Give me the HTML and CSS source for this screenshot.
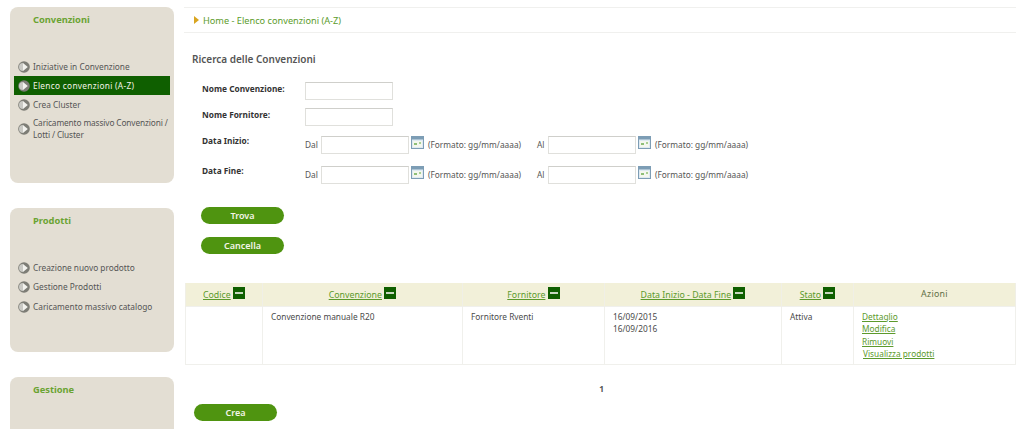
FILE: index.html
```html
<!DOCTYPE html>
<html lang="it">
<head>
    <meta charset="UTF-8">
    <title>Elenco convenzioni</title>
    <link rel="stylesheet" href="styles.css">
</head>
<body>
    <svg class="defs" width="0" height="0">
        <symbol id="bullet" viewBox="0 0 12 12">
            <circle cx="6" cy="6" r="5.8" fill="#7d7d76"/>
            <path d="M5 2 A4 4 0 0 0 5 10 Z" fill="#c9c9c4"/>
            <path d="M5 2 L9.8 6 L5 10 Z" fill="#f2f2ee"/>
        </symbol>
        <symbol id="calendar" viewBox="0 0 13 13">
            <rect x="0.5" y="0.5" width="12" height="12" fill="#dfeaf2" stroke="#7d9db5"/>
            <rect x="1" y="1" width="11" height="2.5" fill="#7d9db5"/>
            <rect x="2" y="5" width="9" height="6" fill="#f4f7ee"/>
            <rect x="3" y="7" width="3" height="2" fill="#8fbf78"/>
            <rect x="8" y="6" width="2" height="2" fill="#a8cf94"/>
        </symbol>
    </svg>

    <div class="page">
        <aside class="sidebar">
            <section class="panel panel-first">
                <h2>Convenzioni</h2>
                <ul class="menu">
                    <li><svg class="bullet"><use href="#bullet"/></svg><a href="#">Iniziative in Convenzione</a></li>
                    <li class="active"><svg class="bullet"><use href="#bullet"/></svg><a href="#">Elenco convenzioni (A-Z)</a></li>
                    <li><svg class="bullet"><use href="#bullet"/></svg><a href="#">Crea Cluster</a></li>
                    <li><svg class="bullet"><use href="#bullet"/></svg><a href="#" class="long">Caricamento massivo Convenzioni /<br>Lotti / Cluster</a></li>
                </ul>
            </section>
            <section class="panel panel-second">
                <h2>Prodotti</h2>
                <ul class="menu">
                    <li><svg class="bullet"><use href="#bullet"/></svg><a href="#">Creazione nuovo prodotto</a></li>
                    <li><svg class="bullet"><use href="#bullet"/></svg><a href="#">Gestione Prodotti</a></li>
                    <li><svg class="bullet"><use href="#bullet"/></svg><a href="#">Caricamento massivo catalogo</a></li>
                </ul>
            </section>
            <section class="panel panel-third">
                <h2>Gestione</h2>
            </section>
        </aside>

        <main class="content">
            <div class="breadcrumb"><span class="arrow"></span>Home - Elenco convenzioni (A-Z)</div>

            <h1>Ricerca delle Convenzioni</h1>

            <form class="search">
                <div class="row row-text">
                    <label>Nome Convenzione:</label>
                    <input type="text">
                </div>
                <div class="row row-text">
                    <label>Nome Fornitore:</label>
                    <input type="text">
                </div>
                <div class="row row-date">
                    <label>Data Inizio:</label>
                    <div class="range">
                        <span class="from">Dal</span><input type="text"><svg class="cal"><use href="#calendar"/></svg><span class="hint">(Formato: gg/mm/aaaa)</span>
                        <span class="to">Al</span><input type="text"><svg class="cal"><use href="#calendar"/></svg><span class="hint">(Formato: gg/mm/aaaa)</span>
                    </div>
                </div>
                <div class="row row-date">
                    <label>Data Fine:</label>
                    <div class="range">
                        <span class="from">Dal</span><input type="text"><svg class="cal"><use href="#calendar"/></svg><span class="hint">(Formato: gg/mm/aaaa)</span>
                        <span class="to">Al</span><input type="text"><svg class="cal"><use href="#calendar"/></svg><span class="hint">(Formato: gg/mm/aaaa)</span>
                    </div>
                </div>
                <div class="actions">
                    <a href="#" class="btn">Trova</a>
                    <a href="#" class="btn">Cancella</a>
                </div>
            </form>

            <table class="results">
                <colgroup>
                    <col class="c-code"><col class="c-name"><col class="c-supplier"><col class="c-date"><col class="c-state"><col class="c-actions">
                </colgroup>
                <thead>
                    <tr>
                        <th><a href="#">Codice</a> <span class="sort"></span></th>
                        <th><a href="#">Convenzione</a> <span class="sort"></span></th>
                        <th><a href="#">Fornitore</a> <span class="sort"></span></th>
                        <th><a href="#">Data Inizio - Data Fine</a> <span class="sort"></span></th>
                        <th><a href="#">Stato</a> <span class="sort"></span></th>
                        <th class="plain">Azioni</th>
                    </tr>
                </thead>
                <tbody>
                    <tr>
                        <td></td>
                        <td>Convenzione manuale R20</td>
                        <td>Fornitore Rventi</td>
                        <td>16/09/2015<br>16/09/2016</td>
                        <td>Attiva</td>
                        <td class="links">
                            <a href="#">Dettaglio</a>
                            <a href="#">Modifica</a>
                            <a href="#">Rimuovi</a>
                            <a href="#" class="shifted">Visualizza prodotti</a>
                        </td>
                    </tr>
                </tbody>
            </table>

            <div class="pager">1</div>

            <a href="#" class="btn btn-create">Crea</a>
        </main>
    </div>
</body>
</html>
```

FILE: styles.css
```css
* {
    margin: 0;
    padding: 0;
    box-sizing: border-box;
}

html, body {
    height: 429px;
    overflow: hidden;
}

body {
    font-family: 'Noto Sans', Verdana, sans-serif;
    font-size: 8.3px;
    color: #4a4a4a;
    background: white;
}

.defs {
    display: block;
    height: 0;
}

a {
    color: #5c9a2c;
}

.page {
    display: flex;
    gap: 10px;
    padding: 7px 7px 0 10px;
}

/* sidebar */
.sidebar {
    width: 164px;
    flex-shrink: 0;
    display: flex;
    flex-direction: column;
    gap: 25px;
}

.panel {
    background: #e3ded3;
    border-radius: 8px;
    padding: 7px 4px 0;
}

.panel-first { height: 176px; }
.panel-second { height: 144px; }

.panel-third {
    height: 52px;
    border-radius: 8px 8px 0 0;
}

.panel h2 {
    font-size: 9.3px;
    font-weight: bold;
    line-height: 12px;
    color: #6aa332;
    padding-left: 19px;
    margin-bottom: 31px;
}

.menu {
    list-style: none;
}

.menu li {
    display: flex;
    align-items: center;
    min-height: 19px;
    padding: 0 0 0 4px;
    line-height: 12px;
}

.menu a {
    color: #555;
    text-decoration: none;
}

.menu .long {
    white-space: nowrap;
    letter-spacing: -0.12px;
}

.menu .active {
    background: #0f5f00;
}

.menu .active a {
    color: #f4f4e8;
    letter-spacing: 0.3px;
}

.menu li:last-child {
    padding-top: 3px;
}

.bullet {
    width: 12px;
    height: 12px;
    flex-shrink: 0;
    margin-right: 3px;
}

/* main column */
.content {
    flex: 1;
    min-width: 0;
}

.breadcrumb {
    height: 26px;
    border-top: 1px solid #f0f0ee;
    border-bottom: 1px solid #f0f0ee;
    padding-left: 10px;
    display: flex;
    align-items: center;
    color: #5c9c2c;
    font-size: 9.2px;
}

.arrow {
    width: 0;
    height: 0;
    border-left: 5px solid #d9a520;
    border-top: 4px solid transparent;
    border-bottom: 4px solid transparent;
    margin-right: 4px;
}

h1 {
    font-size: 10px;
    font-weight: 600;
    color: #555;
    line-height: 12px;
    margin: 20px 0 0 8px;
}

.search {
    padding-left: 18px;
}

.row {
    display: flex;
    align-items: flex-start;
}

.row label {
    width: 103px;
    flex-shrink: 0;
    font-weight: bold;
    color: #333;
    line-height: 12px;
}

.row-text {
    height: 26px;
}

.row-text:first-child {
    margin-top: 17px;
}

.row-text label {
    padding-top: 1px;
}

.row-date {
    height: 30px;
}

.row-date:nth-child(3) {
    margin-top: 2px;
}

.row-date label {
    margin-top: -1px;
}

.row input {
    width: 88px;
    height: 18px;
    border: 1px solid #e0e0dc;
    border-top-color: #cfcfcb;
    background: white;
}

.range {
    display: flex;
    align-items: flex-start;
    line-height: 12px;
}

.range span {
    padding-top: 3px;
    color: #555;
}

.from {
    width: 16px;
}

.to {
    width: 11px;
    margin-left: 17px;
}

.cal {
    width: 13px;
    height: 13px;
    margin: 0 4px 0 2px;
}

.hint {
    width: 92px;
    white-space: nowrap;
}

.actions {
    display: flex;
    flex-direction: column;
    align-items: flex-start;
    gap: 13px;
    margin: 11px 0 0 -1px;
}

.btn {
    display: block;
    width: 83px;
    height: 17px;
    line-height: 17px;
    border-radius: 9px;
    background: #4f9410;
    color: #f4f4e8;
    text-align: center;
    text-decoration: none;
    font-size: 9px;
    font-weight: 600;
}

/* results table */
.results {
    width: 831px;
    margin: 29px 0 0 1px;
    border-collapse: collapse;
    table-layout: fixed;
}

.c-code { width: 77px; }
.c-name { width: 200px; }
.c-supplier { width: 142px; }
.c-date { width: 177px; }
.c-state { width: 72px; }

.results th {
    height: 23px;
    background: #f2f0d9;
    border: 1px solid #f0efe6;
    border-width: 0 1px;
    font-weight: normal;
    font-size: 8.8px;
    color: #555;
    text-align: center;
    white-space: nowrap;
}

.results .plain {
    color: #5f6f45;
    letter-spacing: 0.3px;
}

.sort {
    display: inline-block;
    width: 12px;
    height: 12px;
    vertical-align: -1px;
    background: #0f5f00;
    position: relative;
}

.sort::after {
    content: "";
    position: absolute;
    left: 2px;
    right: 2px;
    top: 5px;
    height: 2px;
    background: #c8d8c0;
}

.results td {
    height: 58px;
    vertical-align: top;
    padding: 4px 8px 0;
    border: 1px solid #f0f0ec;
    line-height: 12px;
}

.links a {
    display: block;
    line-height: 12.5px;
}

.links .shifted {
    margin-left: 1px;
}

.pager {
    text-align: center;
    margin-top: 18px;
    line-height: 12px;
    font-weight: bold;
    color: #555;
    padding-left: 3px;
}

.btn-create {
    margin: 9px 0 0 10px;
}
```
